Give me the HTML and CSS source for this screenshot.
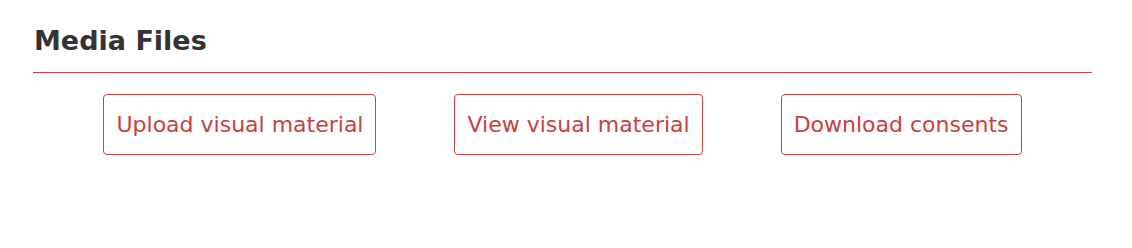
FILE: index.html
```html
<!DOCTYPE html>
<html>
<head>
<meta charset="utf-8">
<link rel="stylesheet" href="styles.css">
</head>
<body>
<section class="media">
  <h2 class="media-title">Media Files</h2>
  <div class="media-actions">
    <a class="btn" href="#">Upload visual material</a>
    <a class="btn" href="#">View visual material</a>
    <a class="btn" href="#">Download consents</a>
  </div>
</section>
</body>
</html>
```
FILE: styles.css
```css
html, body {
  margin: 0;
  padding: 0;
  background: #fff;
}
body {
  font-family: "DejaVu Sans", Verdana, sans-serif;
}
.media {
  margin: 0 40px 0 33px;
  padding-top: 22px;
}
.media-title {
  margin: 0;
  padding: 0 0 12px 1px;
  font-size: 27px;
  font-weight: bold;
  color: #333;
  line-height: 38px;
  border-bottom: 1px solid #c9403f;
}
.media-actions {
  display: flex;
  justify-content: center;
  gap: 78px;
  padding-top: 21px;
}
.btn {
  display: inline-flex;
  align-items: center;
  height: 61px;
  box-sizing: border-box;
  padding: 0 12px;
  border: 1px solid #c9403f;
  border-radius: 4px;
  color: #c9403f;
  text-decoration: none;
  font-size: 22px;
}
```
